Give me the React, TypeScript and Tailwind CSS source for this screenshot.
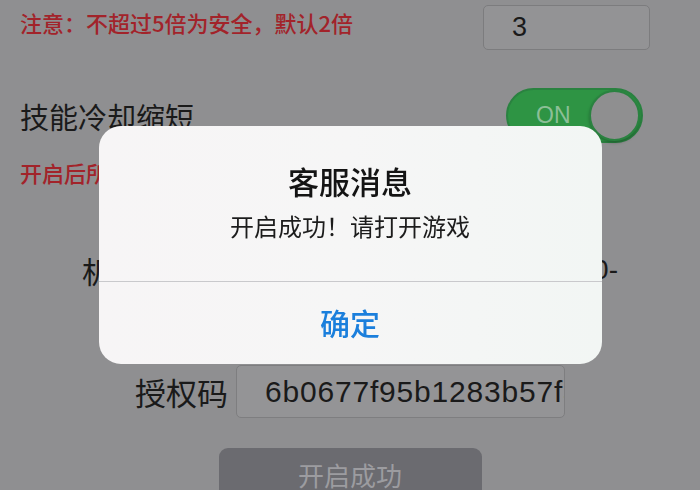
import React from "react";

const cjk = { fontFamily: '"Noto Sans CJK SC", "Noto Sans", sans-serif' };
const latin = { fontFamily: '"Liberation Sans", Arial, "Noto Sans CJK SC", sans-serif' };

function Toggle() {
  return (
    <div className="flex h-[55px] w-[137px] items-center justify-between rounded-full border-2 border-[#2a8240] bg-[#2e9444] pl-[28px] pr-[1px]">
      <span className="text-[23px] leading-none text-[#8cbf97]" style={latin}>
        ON
      </span>
      <span className="h-[51px] w-[51px] rounded-full border-2 border-[#2a8240] bg-[#8f8f90] shadow-[0_2px_3px_rgba(0,0,0,0.25)]" />
    </div>
  );
}

function Dialog() {
  return (
    <div className="fixed inset-0 flex items-center justify-center">
      <div className="flex h-[238px] w-[503px] flex-col overflow-hidden rounded-[22px] bg-gradient-to-r from-[#f7f5f6] via-[#f6f6f6] to-[#f2f6f4]" style={cjk}>
        <div className="flex flex-col items-center pt-[35px]">
          <div className="text-[31px] font-medium leading-[40px] text-[#141414]">客服消息</div>
          <div className="mt-[9px] text-[24px] leading-[32px] text-[#1c1c1c]">开启成功！请打开游戏</div>
        </div>
        <div className="mt-[39px] h-px bg-[#c9c9cc]" />
        <div className="flex flex-1 items-center justify-center pb-[2px] text-[30px] font-medium text-[#1b7fdc]">确定</div>
      </div>
    </div>
  );
}

export default function App() {
  return (
    <div className="relative h-[490px] w-[700px] overflow-hidden bg-[#8f8f91]" style={cjk}>
      <div className="flex flex-col">
        {/* 倍数设置 */}
        <div className="mt-[5px] flex items-start justify-between pl-[20px] pr-[50px]">
          <span className="mt-[3px] text-[22px] font-medium leading-[28px] text-[#a2232a]">注意：不超过5倍为安全，默认2倍</span>
          <div className="flex h-[45px] w-[167px] items-center rounded-[5px] border border-[#7c7c7e] bg-[#939395] pl-[28px] text-[27px] text-[#1a1a1a]" style={latin}>
            3
          </div>
        </div>

        {/* 技能冷却 */}
        <div className="mt-[38px] flex items-center justify-between pl-[20px] pr-[57px]">
          <span className="text-[29px] leading-[40px] text-[#1a1a1a]">技能冷却缩短</span>
          <Toggle />
        </div>
        <div className="mt-[15px] pl-[20px] text-[22px] font-medium leading-[28px] text-[#a2232a]">开启后所有技能冷却时间缩短</div>

        {/* 机器码 */}
        <div className="mt-[64px] flex items-center justify-center">
          <span className="text-[30px] leading-[40px] text-[#1a1a1a]">机器码</span>
          <span className="w-[446px] overflow-hidden whitespace-nowrap text-right text-[28px] leading-[40px] text-[#1a1a1a]" style={latin}>
            A7F2-93C1-5E80-
          </span>
        </div>

        {/* 授权码 */}
        <div className="mt-[75px] flex items-center justify-center gap-[8px]">
          <span className="text-[31px] leading-[40px] text-[#1a1a1a]">授权码</span>
          <div className="flex h-[53px] w-[329px] items-center overflow-hidden whitespace-nowrap rounded-[5px] border border-[#7e7e80] bg-[#949496] pl-[28px] text-[30px] tracking-[0.8px] text-[#1a1a1a]" style={latin}>
            6b0677f95b1283b57f3a
          </div>
        </div>

        {/* 开启按钮 */}
        <div className="mt-[30px] flex justify-center">
          <div className="flex h-[60px] w-[263px] items-start justify-center rounded-[9px] bg-[#6b6b70] pt-[9px] text-[26px] leading-[36px] text-[#9c9ca0]">
            开启成功
          </div>
        </div>
      </div>
      <Dialog />
    </div>
  );
}
